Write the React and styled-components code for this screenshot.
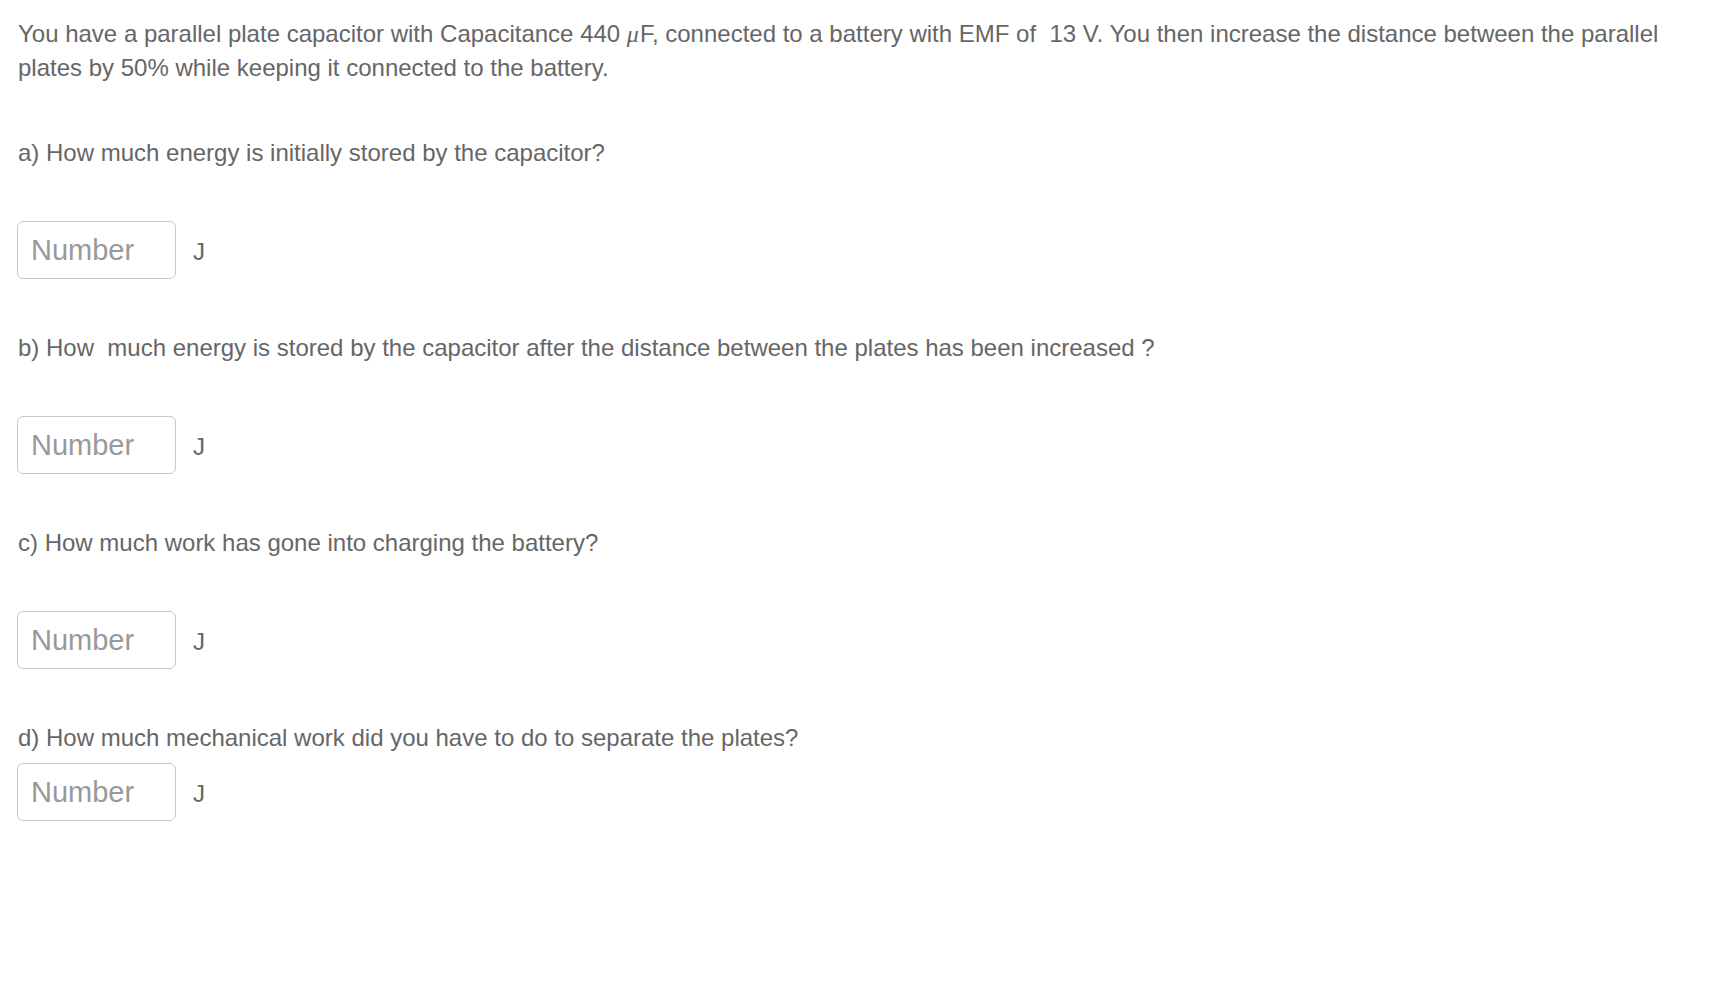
import React from 'react'
import styled, { createGlobalStyle } from 'styled-components'

const GlobalStyle = createGlobalStyle`
  html, body {
    margin: 0;
    padding: 0;
    background: #fff;
  }
  body {
    font-family: "Liberation Sans", Arial, Helvetica, sans-serif;
    color: #666;
  }
`

const Page = styled.main`
  padding: 17px 16px 0 18px;
  font-size: 24px;
  line-height: 34px;
  color: #666;
`

const Intro = styled.p`
  margin: 0;
`

const Mu = styled.span`
  font-family: "Liberation Serif", "Times New Roman", serif;
  font-style: italic;
  padding-right: 1px;
`

const Part = styled.section`
  margin-top: ${(p) => p.$top}px;
`

const Prompt = styled.p`
  margin: 0 0 ${(p) => p.$gap}px;
`

const AnswerRow = styled.div`
  display: flex;
  align-items: center;
  gap: 17px;
  margin-left: -1px;
`

const NumberInput = styled.input`
  box-sizing: border-box;
  width: 159px;
  height: 58px;
  padding: 0 13px;
  border: 1px solid #c9c9c9;
  border-radius: 6px;
  background: #fff;
  font-family: "Liberation Sans", Arial, Helvetica, sans-serif;
  font-size: 29px;
  color: #555;
  outline: none;
  &::placeholder {
    color: #999;
  }
`

const Unit = styled.span`
  font-size: 24px;
  color: #666;
  padding-top: 3px;
`

const parts = [
  { label: 'a) How much energy is initially stored by the capacitor?', top: 51, gap: 51 },
  { label: 'b) How \u00a0much energy is stored by the capacitor after the distance between the plates has been increased ?', top: 52, gap: 51 },
  { label: 'c) How much work has gone into charging the battery?', top: 52, gap: 51 },
  { label: 'd) How much mechanical work did you have to do to separate the plates?', top: 52, gap: 8 },
]

const App = () => {
  return (
    <>
      <GlobalStyle />
      <Page>
        <Intro>
          You have a parallel plate capacitor with Capacitance 440 <Mu>μ</Mu>F, connected to a battery with EMF of
          {' \u00a013'} V. You then increase the distance between the parallel plates by 50% while keeping it
          connected to the battery.
        </Intro>
        {parts.map((p) => (
          <Part key={p.label} $top={p.top}>
            <Prompt $gap={p.gap}>{p.label}</Prompt>
            <AnswerRow>
              <NumberInput type="text" placeholder="Number" />
              <Unit>J</Unit>
            </AnswerRow>
          </Part>
        ))}
      </Page>
    </>
  )
}

export default App
